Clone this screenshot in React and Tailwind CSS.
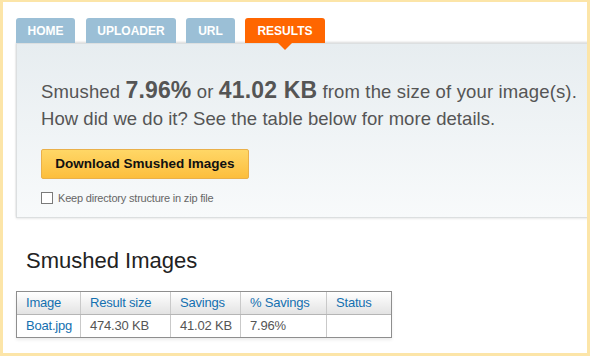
import React from "react";

const font = { fontFamily: '"Liberation Sans", Arial, sans-serif' };

function Tab({ children, active, className }) {
  return (
    <div
      className={
        "relative h-[25px] flex items-center justify-center rounded-t-[3px] text-[12px] font-bold text-white uppercase " +
        (active ? "bg-[#ff6600] " : "bg-[#9bbfd6] ") +
        className
      }
    >
      {children}
      {active && (
        <div className="absolute left-1/2 -translate-x-1/2 top-[25px] w-0 h-0 border-l-[7px] border-r-[7px] border-t-[7px] border-l-transparent border-r-transparent border-t-[#ff6600] z-10" />
      )}
    </div>
  );
}

export default function App() {
  const cols = [
    { label: "Image", w: "w-[64px]", v: "Boat.jpg", blue: true },
    { label: "Result size", w: "w-[90px]", v: "474.30 KB" },
    { label: "Savings", w: "w-[70px]", v: "41.02 KB" },
    { label: "% Savings", w: "w-[86px]", v: "7.96%" },
    { label: "Status", w: "w-[64px]", v: "" },
  ];
  return (
    <div
      style={font}
      className="w-[590px] h-[356px] overflow-hidden bg-white border-l-[3px] border-r-[3px] border-t-[2px] border-b-[3px] border-[#fce5a8] pl-[13px] pt-[16px]"
    >
      <div className="flex gap-[10px]">
        <Tab className="w-[59px] mr-[1px]">Home</Tab>
        <Tab className="w-[90px]">Uploader</Tab>
        <Tab className="w-[49px]">URL</Tab>
        <Tab className="w-[80px]" active>
          Results
        </Tab>
      </div>
      <div className="w-[600px] h-[175px] border border-[#dcdfe0] bg-gradient-to-b from-[#e7edf0] to-[#f8fafb] shadow-[0_-1px_2px_rgba(0,0,0,0.15),0_1px_2px_rgba(0,0,0,0.08)] pl-[24px] pt-[33px]">
        <div className="text-[18.5px] leading-[27px] text-[#555555]">
          <div className="tracking-[0.15px] whitespace-nowrap">
            Smushed <span className="text-[23px] font-bold">7.96%</span> or{" "}
            <span className="text-[23px] font-bold">41.02 KB</span> from the size
            of your image(s).
          </div>
          <div className="tracking-[0.05px]">How did we do it? See the table below for more details.</div>
        </div>
        <div className="mt-[17px] w-[208px] h-[30px] flex items-center justify-center rounded-[2px] border border-[#eab04a] bg-gradient-to-b from-[#ffd766] to-[#fcbe3c] text-[13.5px] font-bold text-[#111111]">
          Download Smushed Images
        </div>
        <div className="mt-[11px] flex items-center gap-[5px] text-[11px] tracking-[-0.2px] text-[#666666]">
          <div className="w-[12px] h-[12px] border border-[#7a7a7a] bg-white" />
          <span>Keep directory structure in zip file</span>
        </div>
      </div>
      <div className="pl-[10px] pt-[30px] text-[22px] leading-[26px] text-[#222222]">
        Smushed Images
      </div>
      <div className="mt-[17px] w-[376px] border border-[#8e8e8e] shadow-[0_2px_3px_rgba(0,0,0,0.08)] text-[13px] tracking-[-0.2px]">
        <div className="flex h-[23px] border-b border-[#b5b5b5] bg-gradient-to-b from-[#ffffff] to-[#e3e3e3]">
          {cols.map((c, i) => (
            <div
              key={c.label}
              className={
                c.w +
                " flex items-center pl-[9px] text-[#1470b0] " +
                (i < cols.length - 1 ? "border-r border-[#c9c9c9]" : "flex-1")
              }
            >
              {c.label}
            </div>
          ))}
        </div>
        <div className="flex h-[22px] bg-white">
          {cols.map((c, i) => (
            <div
              key={c.label}
              className={
                c.w +
                " flex items-center pl-[9px] " +
                (c.blue ? "text-[#1470b0] " : "text-[#555555] ") +
                (i < cols.length - 1 ? "border-r border-[#c9c9c9]" : "flex-1")
              }
            >
              {c.v}
            </div>
          ))}
        </div>
      </div>
    </div>
  );
}
